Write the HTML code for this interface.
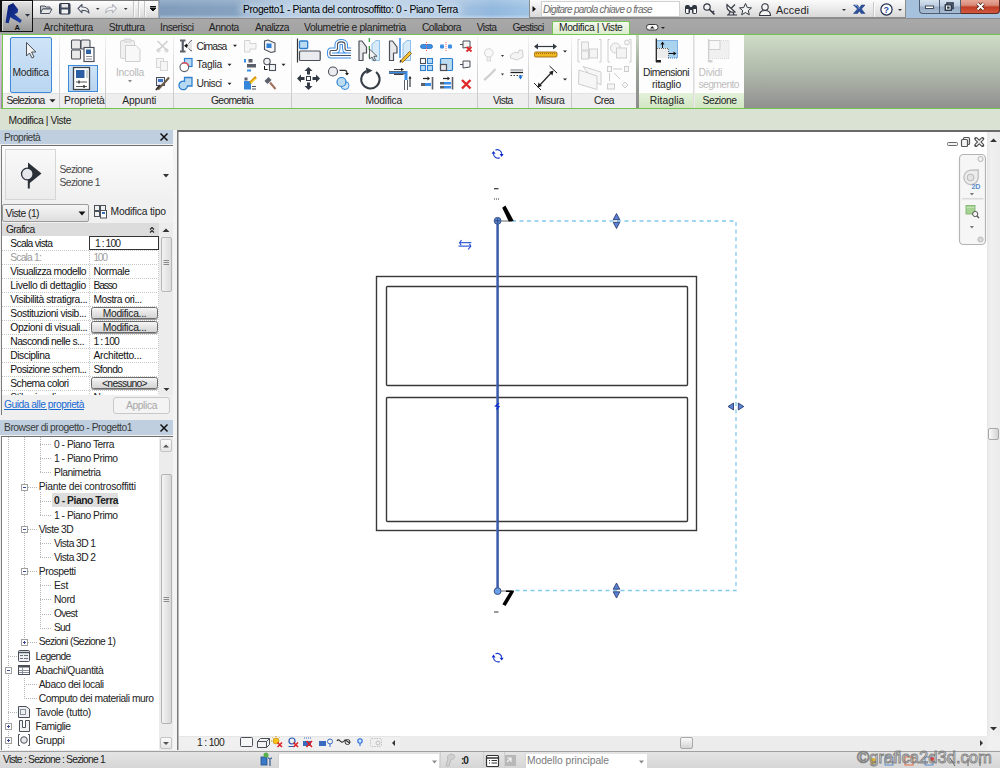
<!DOCTYPE html>
<html><head><meta charset="utf-8">
<style>
*{margin:0;padding:0;box-sizing:border-box}
html,body{width:1000px;height:768px;overflow:hidden;background:#f0f0f0;font-family:"Liberation Sans",sans-serif;font-size:10px;color:#1e1e1e}
.a{position:absolute}
.t{position:absolute;white-space:nowrap;line-height:1;}
svg{position:absolute;overflow:visible}
</style></head><body>
<div class="a" style="left:0px;top:0px;width:1000px;height:18px;background:linear-gradient(90deg,#8aa6c4,#a9c4de)"></div>
<div class="a" style="left:159px;top:0px;width:371px;height:18px;background:linear-gradient(90deg,#7f9cbc 0%,#85a2c1 20%,#a9c2dc 35%,#b9cee4 55%,#a6c2e0 80%,#92b8de 90%,#a0c4e4 100%)"></div>
<div class="a" style="left:160px;top:0px;width:370px;height:18px;background:linear-gradient(180deg,rgba(255,255,255,.18),rgba(255,255,255,0) 45%,rgba(0,0,0,0) 80%,rgba(255,255,255,.35))"></div>
<div class="a" style="left:240px;top:4px;width:222px;height:11px;background:rgba(214,228,242,.6);filter:blur(3px);border-radius:6px"></div>
<div class="t" style="left:243.00px;top:5.48px;font-size:10.3px;color:#000;letter-spacing:-0.359px;">Progetto1 - Pianta del controsoffitto: 0 - Piano Terra</div>
<div class="a" style="left:32px;top:0px;width:127px;height:19px;background:linear-gradient(180deg,#fdfdfd,#efefef 40%,#dedede 90%,#d0d0d0);border-top:1px solid #7a7a7a;border-bottom:1px solid #6e6e6e;border-right:1px solid #a8a8a8"></div>
<div class="a" style="left:529px;top:0px;width:377px;height:18px;background:linear-gradient(180deg,#fbfbfb,#ececec 45%,#d9d9d9);border-bottom:1px solid #8c8c8c;border-left:1px solid #8c8c8c;border-right:1px solid #8c8c8c"></div>
<div class="a" style="left:541px;top:1px;width:139px;height:16px;background:#fff;border:1px solid #d0d0d0"></div>
<div class="t" style="left:543.00px;top:5.24px;font-size:10px;color:#6a6a6a;letter-spacing:-0.703px;font-style:italic;">Digitare parola chiave o frase</div>
<div class="t" style="left:776.00px;top:5.06px;font-size:10.8px;color:#262626;letter-spacing:0.096px;">Accedi</div>
<div class="a" style="left:919px;top:0px;width:21px;height:14px;border:1px solid #4e5d72;border-top:none;border-radius:0 0 0 4px;background:linear-gradient(180deg,#d6e2ee,#bccde0 45%,#98acc6 55%,#a8bcd4)"></div>
<div class="a" style="left:940px;top:0px;width:21px;height:14px;border:1px solid #4e5d72;border-top:none;border-left:none;background:linear-gradient(180deg,#d6e2ee,#bccde0 45%,#98acc6 55%,#a8bcd4)"></div>
<div class="a" style="left:961px;top:0px;width:39px;height:14px;border:1px solid #5e2a22;border-top:none;border-left:none;border-radius:0 0 4px 0;background:linear-gradient(180deg,#e8a898,#d88a78 40%,#c23c24 55%,#d05a40)"></div>
<div class="a" style="left:0px;top:18px;width:1000px;height:16px;background:linear-gradient(180deg,#a9a9a9,#a2a2a2)"></div>
<div class="a" style="left:32px;top:18px;width:968px;height:1px;background:#8c8c8c"></div>
<div class="t" style="left:43.50px;top:23.28px;font-size:10.3px;color:#222;letter-spacing:-0.264px;">Architettura</div>
<div class="t" style="left:108.70px;top:23.28px;font-size:10.3px;color:#222;letter-spacing:-0.389px;">Struttura</div>
<div class="t" style="left:160.00px;top:23.28px;font-size:10.3px;color:#222;letter-spacing:-0.465px;">Inserisci</div>
<div class="t" style="left:208.70px;top:23.28px;font-size:10.3px;color:#222;letter-spacing:-0.395px;">Annota</div>
<div class="t" style="left:255.00px;top:23.28px;font-size:10.3px;color:#222;letter-spacing:-0.619px;">Analizza</div>
<div class="t" style="left:304.00px;top:23.28px;font-size:10.3px;color:#222;letter-spacing:-0.354px;">Volumetrie e planimetria</div>
<div class="t" style="left:422.00px;top:23.28px;font-size:10.3px;color:#222;letter-spacing:-0.566px;">Collabora</div>
<div class="t" style="left:476.80px;top:23.28px;font-size:10.3px;color:#222;letter-spacing:-0.624px;">Vista</div>
<div class="t" style="left:512.40px;top:23.28px;font-size:10.3px;color:#222;letter-spacing:-0.680px;">Gestisci</div>
<div class="a" style="left:552px;top:21px;width:78px;height:14px;background:linear-gradient(180deg,#f3f8ee,#d9ecca);border:1px solid #74c452;border-bottom:none;border-radius:2px 2px 0 0"></div>
<div class="t" style="left:559.00px;top:23.28px;font-size:10.3px;color:#222;letter-spacing:-0.373px;">Modifica | Viste</div>
<div class="a" style="left:0px;top:34px;width:1000px;height:75px;background:linear-gradient(180deg,#cfdec6 0%,#b3bdae 45%,#8f8f8f 100%)"></div>
<div class="a" style="left:0px;top:34px;width:1000px;height:1px;background:#74c452"></div>
<div class="a" style="left:0px;top:108px;width:1000px;height:1px;background:#74c452"></div>
<div class="a" style="left:2px;top:35px;width:742px;height:73px;background:#fdfdfd"></div>
<div class="a" style="left:2px;top:35px;width:1px;height:73px;background:#74c452"></div>
<div class="a" style="left:0px;top:34px;width:1px;height:75px;background:#d4b4dc"></div>
<div class="a" style="left:3px;top:93px;width:741px;height:15px;background:#eeeeee"></div>
<div class="a" style="left:3px;top:93px;width:741px;height:1px;background:#e3e3e3"></div>
<div class="a" style="left:639px;top:93px;width:54px;height:15px;background:linear-gradient(180deg,#e4f1da,#d1e6c2)"></div>
<div class="a" style="left:695px;top:93px;width:49px;height:15px;background:linear-gradient(180deg,#e4f1da,#d1e6c2)"></div>
<div class="a" style="left:59px;top:36px;width:1px;height:72px;background:linear-gradient(180deg,#f4f4f4,#d4d4d4 50%,#c8c8c8)"></div>
<div class="a" style="left:105px;top:36px;width:1px;height:72px;background:linear-gradient(180deg,#f4f4f4,#d4d4d4 50%,#c8c8c8)"></div>
<div class="a" style="left:173px;top:36px;width:1px;height:72px;background:linear-gradient(180deg,#f4f4f4,#d4d4d4 50%,#c8c8c8)"></div>
<div class="a" style="left:291px;top:36px;width:1px;height:72px;background:linear-gradient(180deg,#f4f4f4,#d4d4d4 50%,#c8c8c8)"></div>
<div class="a" style="left:477px;top:36px;width:1px;height:72px;background:linear-gradient(180deg,#f4f4f4,#d4d4d4 50%,#c8c8c8)"></div>
<div class="a" style="left:528px;top:36px;width:1px;height:72px;background:linear-gradient(180deg,#f4f4f4,#d4d4d4 50%,#c8c8c8)"></div>
<div class="a" style="left:571px;top:36px;width:1px;height:72px;background:linear-gradient(180deg,#f4f4f4,#d4d4d4 50%,#c8c8c8)"></div>
<div class="a" style="left:636px;top:35px;width:3px;height:73px;background:linear-gradient(180deg,#c9d6c2,#9aa297 50%,#8c8c8c)"></div>
<div class="a" style="left:693px;top:35px;width:2px;height:73px;background:linear-gradient(90deg,#d4d4d4,#f4f4f4)"></div>
<div class="t" style="left:6.50px;top:95.98px;font-size:10.3px;color:#262626;letter-spacing:-0.807px;">Seleziona</div>
<div class="t" style="left:64.00px;top:95.98px;font-size:10.3px;color:#262626;letter-spacing:-0.144px;">Proprietà</div>
<div class="t" style="left:122.30px;top:95.98px;font-size:10.3px;color:#262626;letter-spacing:-0.136px;">Appunti</div>
<div class="t" style="left:211.00px;top:95.98px;font-size:10.3px;color:#262626;letter-spacing:-0.677px;">Geometria</div>
<div class="t" style="left:365.50px;top:95.98px;font-size:10.3px;color:#262626;letter-spacing:-0.232px;">Modifica</div>
<div class="t" style="left:493.00px;top:95.98px;font-size:10.3px;color:#262626;letter-spacing:-0.644px;">Vista</div>
<div class="t" style="left:535.50px;top:95.98px;font-size:10.3px;color:#262626;letter-spacing:-0.318px;">Misura</div>
<div class="t" style="left:594.00px;top:95.98px;font-size:10.3px;color:#262626;letter-spacing:-0.582px;">Crea</div>
<div class="t" style="left:649.80px;top:95.98px;font-size:10.3px;color:#262626;letter-spacing:0.020px;">Ritaglia</div>
<div class="t" style="left:702.50px;top:95.98px;font-size:10.3px;color:#262626;letter-spacing:-0.464px;">Sezione</div>
<div class="a" style="left:10px;top:37px;width:42px;height:56px;background:linear-gradient(180deg,#cfe3f7,#bad6f1);border:1px solid #3c8ad8;border-radius:2px"></div>
<div class="a" style="left:68px;top:65px;width:30px;height:27px;background:linear-gradient(180deg,#cfe3f7,#b7d4f0);border:1px solid #3c8ad8"></div>
<div class="t" style="left:12.50px;top:68.28px;font-size:10.3px;color:#262626;letter-spacing:-0.270px;">Modifica</div>
<div class="t" style="left:116.00px;top:68.28px;font-size:10.3px;color:#b8b8b8;letter-spacing:-0.254px;">Incolla</div>
<div class="t" style="left:196.60px;top:41.98px;font-size:10.3px;color:#262626;letter-spacing:-0.854px;">Cimasa</div>
<div class="t" style="left:196.60px;top:60.48px;font-size:10.3px;color:#262626;letter-spacing:-0.237px;">Taglia</div>
<div class="t" style="left:196.60px;top:79.18px;font-size:10.3px;color:#262626;letter-spacing:-0.508px;">Unisci</div>
<div class="t" style="left:643.00px;top:68.48px;font-size:10.3px;color:#262626;letter-spacing:-0.495px;">Dimensioni</div>
<div class="t" style="left:652.00px;top:80.08px;font-size:10.3px;color:#262626;letter-spacing:-0.166px;">ritaglio</div>
<div class="t" style="left:698.50px;top:68.48px;font-size:10.3px;color:#bdbdbd;letter-spacing:-0.279px;">Dividi</div>
<div class="t" style="left:698.50px;top:80.08px;font-size:10.3px;color:#bdbdbd;letter-spacing:-0.596px;">segmento</div>
<div class="a" style="left:0px;top:109px;width:1000px;height:21px;background:#dae3d3"></div>
<div class="t" style="left:8.50px;top:115.98px;font-size:10.3px;color:#222;letter-spacing:-0.436px;">Modifica | Viste</div>
<div class="a" style="left:0px;top:130px;width:177px;height:620px;background:#f0f0f0"></div>
<div class="a" style="left:0px;top:130px;width:173px;height:14px;background:#bfcfdf"></div>
<div class="t" style="left:4.00px;top:132.78px;font-size:10.3px;color:#3a3a3a;letter-spacing:-0.644px;">Proprietà</div>
<div class="a" style="left:1px;top:145px;width:1px;height:270px;background:#7b7b7b"></div>
<div class="a" style="left:1px;top:145px;width:172px;height:1px;background:#6e6e6e"></div>
<div class="a" style="left:2px;top:146px;width:171px;height:56px;background:linear-gradient(180deg,#fdfdfd,#f0f0f0)"></div>
<div class="a" style="left:5px;top:149px;width:51px;height:51px;background:linear-gradient(180deg,#f9f9f9,#ececec);border:1px solid #d6d6d6"></div>
<div class="t" style="left:59.50px;top:165.48px;font-size:10.3px;color:#4a4a4a;letter-spacing:-0.607px;">Sezione</div>
<div class="t" style="left:59.50px;top:177.58px;font-size:10.3px;color:#4a4a4a;letter-spacing:-0.594px;">Sezione 1</div>
<div class="a" style="left:2px;top:204px;width:87px;height:18px;background:linear-gradient(180deg,#f6f6f6,#dedede);border:1px solid #9a9a9a;border-radius:2px"></div>
<div class="t" style="left:5.50px;top:208.68px;font-size:10.3px;color:#222;letter-spacing:-0.517px;">Viste (1)</div>
<div class="t" style="left:110.60px;top:206.98px;font-size:10.3px;color:#222;letter-spacing:-0.210px;">Modifica tipo</div>
<div class="a" style="left:2px;top:223px;width:157px;height:13px;background:#dcdcdc"></div>
<div class="t" style="left:6.00px;top:224.68px;font-size:10.3px;color:#222;letter-spacing:-0.672px;">Grafica</div>
<div class="a" style="left:2px;top:236px;width:157px;height:159px;background:#fff"></div>
<div class="a" style="left:159px;top:223px;width:14px;height:172px;background:#ececec"></div>
<div class="a" style="left:161px;top:237px;width:11px;height:55px;background:linear-gradient(90deg,#f2f2f2,#dcdcdc);border:1px solid #b8b8b8;border-radius:2px"></div>
<div class="t" style="left:10.30px;top:239.18px;font-size:10.3px;color:#111;letter-spacing:-0.712px;">Scala vista</div>
<div class="t" style="left:93.50px;top:239.18px;font-size:10.3px;color:#111;letter-spacing:-0.859px;">1 : 100</div>
<div class="a" style="left:2px;top:250px;width:157px;height:1px;background:repeating-linear-gradient(90deg,#c8c8c8 0 1px,#fff 1px 2px)"></div>
<div class="t" style="left:10.30px;top:253.18px;font-size:10.3px;color:#9a9a9a;letter-spacing:-0.822px;">Scala  1:</div>
<div class="t" style="left:93.50px;top:253.18px;font-size:10.3px;color:#a0a0a0;letter-spacing:-1.401px;">100</div>
<div class="a" style="left:2px;top:264px;width:157px;height:1px;background:repeating-linear-gradient(90deg,#c8c8c8 0 1px,#fff 1px 2px)"></div>
<div class="t" style="left:10.30px;top:267.18px;font-size:10.3px;color:#111;letter-spacing:-0.524px;">Visualizza modello</div>
<div class="t" style="left:93.50px;top:267.18px;font-size:10.3px;color:#111;letter-spacing:-0.417px;">Normale</div>
<div class="a" style="left:2px;top:278px;width:157px;height:1px;background:repeating-linear-gradient(90deg,#c8c8c8 0 1px,#fff 1px 2px)"></div>
<div class="t" style="left:10.30px;top:281.18px;font-size:10.3px;color:#111;letter-spacing:-0.310px;">Livello di dettaglio</div>
<div class="t" style="left:93.50px;top:281.18px;font-size:10.3px;color:#111;letter-spacing:-1.191px;">Basso</div>
<div class="a" style="left:2px;top:292px;width:157px;height:1px;background:repeating-linear-gradient(90deg,#c8c8c8 0 1px,#fff 1px 2px)"></div>
<div class="t" style="left:10.30px;top:295.18px;font-size:10.3px;color:#111;letter-spacing:-0.401px;">Visibilità stratigra...</div>
<div class="t" style="left:93.50px;top:295.18px;font-size:10.3px;color:#111;letter-spacing:-0.489px;">Mostra ori...</div>
<div class="a" style="left:2px;top:306px;width:157px;height:1px;background:repeating-linear-gradient(90deg,#c8c8c8 0 1px,#fff 1px 2px)"></div>
<div class="t" style="left:10.30px;top:309.18px;font-size:10.3px;color:#111;letter-spacing:-0.416px;">Sostituzioni visib...</div>
<div class="a" style="left:91px;top:307px;width:67px;height:12px;background:linear-gradient(180deg,#f6f6f6,#e4e4e4 50%,#d4d4d4);border:1px solid #6b6b6b;border-radius:2.5px;box-shadow:0 1px 0 #9a9a9a"></div>
<div class="t" style="left:102.75px;top:309.18px;font-size:10.3px;color:#222;letter-spacing:-0.312px;">Modifica...</div>
<div class="a" style="left:2px;top:320px;width:157px;height:1px;background:repeating-linear-gradient(90deg,#c8c8c8 0 1px,#fff 1px 2px)"></div>
<div class="t" style="left:10.30px;top:323.18px;font-size:10.3px;color:#111;letter-spacing:-0.423px;">Opzioni di visuali...</div>
<div class="a" style="left:91px;top:321px;width:67px;height:12px;background:linear-gradient(180deg,#f6f6f6,#e4e4e4 50%,#d4d4d4);border:1px solid #6b6b6b;border-radius:2.5px;box-shadow:0 1px 0 #9a9a9a"></div>
<div class="t" style="left:102.75px;top:323.18px;font-size:10.3px;color:#222;letter-spacing:-0.312px;">Modifica...</div>
<div class="a" style="left:2px;top:334px;width:157px;height:1px;background:repeating-linear-gradient(90deg,#c8c8c8 0 1px,#fff 1px 2px)"></div>
<div class="t" style="left:10.30px;top:337.18px;font-size:10.3px;color:#111;letter-spacing:-0.552px;">Nascondi nelle s...</div>
<div class="t" style="left:93.50px;top:337.18px;font-size:10.3px;color:#111;letter-spacing:-0.859px;">1 : 100</div>
<div class="a" style="left:2px;top:348px;width:157px;height:1px;background:repeating-linear-gradient(90deg,#c8c8c8 0 1px,#fff 1px 2px)"></div>
<div class="t" style="left:10.30px;top:351.18px;font-size:10.3px;color:#111;letter-spacing:-0.468px;">Disciplina</div>
<div class="t" style="left:93.50px;top:351.18px;font-size:10.3px;color:#111;letter-spacing:-0.315px;">Architetto...</div>
<div class="a" style="left:2px;top:362px;width:157px;height:1px;background:repeating-linear-gradient(90deg,#c8c8c8 0 1px,#fff 1px 2px)"></div>
<div class="t" style="left:10.30px;top:365.18px;font-size:10.3px;color:#111;letter-spacing:-0.582px;">Posizione schem...</div>
<div class="t" style="left:93.50px;top:365.18px;font-size:10.3px;color:#111;letter-spacing:-0.612px;">Sfondo</div>
<div class="a" style="left:2px;top:376px;width:157px;height:1px;background:repeating-linear-gradient(90deg,#c8c8c8 0 1px,#fff 1px 2px)"></div>
<div class="t" style="left:10.30px;top:379.18px;font-size:10.3px;color:#111;letter-spacing:-0.545px;">Schema colori</div>
<div class="a" style="left:91px;top:377px;width:67px;height:12px;background:linear-gradient(180deg,#f6f6f6,#e4e4e4 50%,#d4d4d4);border:1px solid #6b6b6b;border-radius:2.5px;box-shadow:0 1px 0 #9a9a9a"></div>
<div class="t" style="left:102.00px;top:379.18px;font-size:10.3px;color:#222;letter-spacing:-0.668px;">&lt;nessuno&gt;</div>
<div class="a" style="left:2px;top:390px;width:157px;height:1px;background:repeating-linear-gradient(90deg,#c8c8c8 0 1px,#fff 1px 2px)"></div>
<div class="t" style="left:10.30px;top:393.18px;font-size:10.3px;color:#111;letter-spacing:-0.465px;">Stile visualizzaz...</div>
<div class="t" style="left:93.50px;top:393.18px;font-size:10.3px;color:#111;letter-spacing:-0.955px;">Nessuno</div>
<div class="a" style="left:89px;top:237px;width:1px;height:158px;background:repeating-linear-gradient(180deg,#c8c8c8 0 1px,#fff 1px 2px)"></div>
<div class="a" style="left:158px;top:237px;width:1px;height:158px;background:repeating-linear-gradient(180deg,#c8c8c8 0 1px,#fff 1px 2px)"></div>
<div class="a" style="left:89px;top:236px;width:70px;height:14px;background:#fff;border:1.5px solid #333"></div>
<div class="t" style="left:95.00px;top:239.18px;font-size:10.3px;color:#222;letter-spacing:-0.931px;">1 : 100</div>
<div class="a" style="left:2px;top:395px;width:171px;height:23px;background:#f0f0f0"></div>
<div class="t" style="left:4.00px;top:399.78px;font-size:10.3px;color:#1a6ad0;letter-spacing:-0.495px;text-decoration:underline;">Guida alle proprietà</div>
<div class="a" style="left:113px;top:397px;width:57px;height:17px;background:#f4f4f4;border:1px solid #c8c8c8;border-radius:3px"></div>
<div class="t" style="left:126.00px;top:401.48px;font-size:10.3px;color:#a8a8a8;letter-spacing:-0.400px;">Applica</div>
<div class="a" style="left:0px;top:420px;width:173px;height:15px;background:#bfcfdf"></div>
<div class="t" style="left:4.00px;top:422.98px;font-size:10.3px;color:#3a3a3a;letter-spacing:-0.489px;">Browser di progetto - Progetto1</div>
<div class="a" style="left:1px;top:436px;width:172px;height:1px;background:#6e6e6e"></div>
<div class="a" style="left:1px;top:436px;width:1px;height:314px;background:#7b7b7b"></div>
<div class="a" style="left:2px;top:437px;width:157px;height:313px;background:#fff"></div>
<div class="a" style="left:159px;top:437px;width:14px;height:313px;background:#ececec"></div>
<div class="a" style="left:161px;top:474px;width:11px;height:250px;background:linear-gradient(90deg,#f4f4f4,#d8d8d8);border:1px solid #b4b4b4;border-radius:2px"></div>
<div class="a" style="left:160px;top:439px;width:12px;height:13px;background:linear-gradient(180deg,#fafafa,#e6e6e6);border:1px solid #c4c4c4;border-radius:2px"></div>
<div class="a" style="left:160px;top:737px;width:12px;height:12px;background:linear-gradient(180deg,#fafafa,#e6e6e6);border:1px solid #c4c4c4;border-radius:2px"></div>
<div class="a" style="left:52px;top:493px;width:66px;height:14px;background:#dedede"></div>
<div class="t" style="left:54.00px;top:440.08px;font-size:10.3px;color:#222;letter-spacing:-0.492px;">0 - Piano Terra</div>
<div class="t" style="left:54.00px;top:454.18px;font-size:10.3px;color:#222;letter-spacing:-0.499px;">1 - Piano Primo</div>
<div class="t" style="left:54.00px;top:468.28px;font-size:10.3px;color:#222;letter-spacing:-0.456px;">Planimetria</div>
<div class="t" style="left:38.70px;top:482.38px;font-size:10.3px;color:#222;letter-spacing:-0.281px;">Piante dei controsoffitti</div>
<div class="t" style="left:54.00px;top:496.48px;font-size:10.3px;color:#222;letter-spacing:-0.453px;font-weight:bold;">0 - Piano Terra</div>
<div class="t" style="left:54.00px;top:510.58px;font-size:10.3px;color:#222;letter-spacing:-0.499px;">1 - Piano Primo</div>
<div class="t" style="left:38.70px;top:524.68px;font-size:10.3px;color:#222;letter-spacing:-0.531px;">Viste 3D</div>
<div class="t" style="left:54.00px;top:538.78px;font-size:10.3px;color:#222;letter-spacing:-0.584px;">Vista 3D 1</div>
<div class="t" style="left:54.00px;top:552.88px;font-size:10.3px;color:#222;letter-spacing:-0.584px;">Vista 3D 2</div>
<div class="t" style="left:38.70px;top:566.98px;font-size:10.3px;color:#222;letter-spacing:-0.406px;">Prospetti</div>
<div class="t" style="left:54.00px;top:581.08px;font-size:10.3px;color:#222;letter-spacing:-0.297px;">Est</div>
<div class="t" style="left:54.00px;top:595.18px;font-size:10.3px;color:#222;letter-spacing:-0.332px;">Nord</div>
<div class="t" style="left:54.00px;top:609.28px;font-size:10.3px;color:#222;letter-spacing:-0.784px;">Ovest</div>
<div class="t" style="left:54.00px;top:623.38px;font-size:10.3px;color:#222;letter-spacing:-0.781px;">Sud</div>
<div class="t" style="left:38.70px;top:637.48px;font-size:10.3px;color:#222;letter-spacing:-0.676px;">Sezioni (Sezione 1)</div>
<div class="t" style="left:35.50px;top:651.58px;font-size:10.3px;color:#222;letter-spacing:-0.734px;">Legende</div>
<div class="t" style="left:35.50px;top:665.68px;font-size:10.3px;color:#222;letter-spacing:-0.355px;">Abachi/Quantità</div>
<div class="t" style="left:38.70px;top:679.78px;font-size:10.3px;color:#222;letter-spacing:-0.448px;">Abaco dei locali</div>
<div class="t" style="left:38.70px;top:693.88px;font-size:10.3px;color:#222;letter-spacing:-0.443px;">Computo dei materiali muro</div>
<div class="t" style="left:35.50px;top:707.98px;font-size:10.3px;color:#222;letter-spacing:-0.289px;">Tavole (tutto)</div>
<div class="t" style="left:35.50px;top:722.08px;font-size:10.3px;color:#222;letter-spacing:-0.490px;">Famiglie</div>
<div class="t" style="left:35.50px;top:736.18px;font-size:10.3px;color:#222;letter-spacing:-0.320px;">Gruppi</div>
<svg style="left:0px;top:130px" width="177" height="620" viewBox="0 130 177 620"><path d="M8.5,437 V749" stroke="#b4b4b4" stroke-width="1" stroke-dasharray="1,1"/><path d="M24.5,437 V642" stroke="#b4b4b4" stroke-width="1" stroke-dasharray="1,1"/><path d="M40.5,437 V472" stroke="#b4b4b4" stroke-width="1" stroke-dasharray="1,1"/><path d="M40,444.5 H52" stroke="#b4b4b4" stroke-width="1" stroke-dasharray="1,1"/><path d="M40,458.5 H52" stroke="#b4b4b4" stroke-width="1" stroke-dasharray="1,1"/><path d="M40,472.5 H52" stroke="#b4b4b4" stroke-width="1" stroke-dasharray="1,1"/><path d="M40.5,492 V515" stroke="#b4b4b4" stroke-width="1" stroke-dasharray="1,1"/><path d="M40,501.5 H52" stroke="#b4b4b4" stroke-width="1" stroke-dasharray="1,1"/><path d="M40,515.5 H52" stroke="#b4b4b4" stroke-width="1" stroke-dasharray="1,1"/><path d="M40.5,534 V557" stroke="#b4b4b4" stroke-width="1" stroke-dasharray="1,1"/><path d="M40,543.5 H52" stroke="#b4b4b4" stroke-width="1" stroke-dasharray="1,1"/><path d="M40,557.5 H52" stroke="#b4b4b4" stroke-width="1" stroke-dasharray="1,1"/><path d="M40.5,576 V628" stroke="#b4b4b4" stroke-width="1" stroke-dasharray="1,1"/><path d="M40,585.5 H52" stroke="#b4b4b4" stroke-width="1" stroke-dasharray="1,1"/><path d="M40,599.5 H52" stroke="#b4b4b4" stroke-width="1" stroke-dasharray="1,1"/><path d="M40,614.5 H52" stroke="#b4b4b4" stroke-width="1" stroke-dasharray="1,1"/><path d="M40,628.5 H52" stroke="#b4b4b4" stroke-width="1" stroke-dasharray="1,1"/><path d="M24,487.5 H37" stroke="#b4b4b4" stroke-width="1" stroke-dasharray="1,1"/><path d="M24,529.5 H37" stroke="#b4b4b4" stroke-width="1" stroke-dasharray="1,1"/><path d="M24,571.5 H37" stroke="#b4b4b4" stroke-width="1" stroke-dasharray="1,1"/><path d="M24,642.5 H37" stroke="#b4b4b4" stroke-width="1" stroke-dasharray="1,1"/><path d="M8,656.5 H18" stroke="#b4b4b4" stroke-width="1" stroke-dasharray="1,1"/><path d="M8,712.5 H18" stroke="#b4b4b4" stroke-width="1" stroke-dasharray="1,1"/><path d="M24.5,678 V698" stroke="#b4b4b4" stroke-width="1" stroke-dasharray="1,1"/><path d="M24,684.5 H37" stroke="#b4b4b4" stroke-width="1" stroke-dasharray="1,1"/><path d="M24,698.5 H37" stroke="#b4b4b4" stroke-width="1" stroke-dasharray="1,1"/><rect x="21.5" y="484.5" width="6" height="6" fill="#fff" stroke="#a0a0a0"/><path d="M23,487.5 H26" stroke="#3a4a9a" stroke-width="1"/><rect x="21.5" y="526.5" width="6" height="6" fill="#fff" stroke="#a0a0a0"/><path d="M23,529.5 H26" stroke="#3a4a9a" stroke-width="1"/><rect x="21.5" y="568.5" width="6" height="6" fill="#fff" stroke="#a0a0a0"/><path d="M23,571.5 H26" stroke="#3a4a9a" stroke-width="1"/><rect x="21.5" y="639.5" width="6" height="6" fill="#fff" stroke="#a0a0a0"/><path d="M23,642.5 H26" stroke="#3a4a9a" stroke-width="1"/><path d="M24.5,641 V644" stroke="#3a4a9a" stroke-width="1"/><rect x="5.5" y="667.5" width="6" height="6" fill="#fff" stroke="#a0a0a0"/><path d="M7,670.5 H10" stroke="#3a4a9a" stroke-width="1"/><rect x="5.5" y="723.5" width="6" height="6" fill="#fff" stroke="#a0a0a0"/><path d="M7,726.5 H10" stroke="#3a4a9a" stroke-width="1"/><path d="M8.5,725 V728" stroke="#3a4a9a" stroke-width="1"/><rect x="5.5" y="737.5" width="6" height="6" fill="#fff" stroke="#a0a0a0"/><path d="M7,740.5 H10" stroke="#3a4a9a" stroke-width="1"/><path d="M8.5,739 V742" stroke="#3a4a9a" stroke-width="1"/><rect x="18.5" y="650.5" width="11" height="11" rx="1" fill="#eef0f4" stroke="#4a505a"/><path d="M19,652.5 H29" stroke="#4a505a" stroke-width="1.4"/><path d="M20,655.5 H23 M24,655.5 H28 M20,658.5 H23 M24,658.5 H28" stroke="#6a707a"/><rect x="18.5" y="665.5" width="11" height="9" fill="#fff" stroke="#4a505a"/><rect x="18" y="665" width="12" height="2.5" fill="#4a505a"/><path d="M19,670.5 H29 M19,672.5 H29 M22.5,667 V674" stroke="#8a909a"/><path d="M18.5,706.5 H26 L29.5,709 V717.5 H18.5 Z" fill="#eef0f4" stroke="#4a505a"/><rect x="20.5" y="709.5" width="5" height="5" fill="none" stroke="#8a909a"/><path d="M19.5,720.5 V731.5 H29.5 V720.5 H25.5 V727.5 H22.5 V720.5 Z" fill="#f2f2f2" stroke="#4a505a"/><path d="M20,734.5 H18.5 V745.5 H20 M28,734.5 H29.5 V745.5 H28" stroke="#4a505a" fill="none"/><circle cx="24" cy="740" r="3.3" fill="#e8e8e8" stroke="#4a505a"/><path d="M28,162.5 L41.5,173.5 L28,184.5 Z" fill="#2a2f38"/><path d="M28.8,179 V188.5" stroke="#2a2f38" stroke-width="2"/><circle cx="27.3" cy="174" r="5.8" fill="#e6e7ec" stroke="#2a2f38" stroke-width="1.3"/><path d="M163,174 L169,174 L166,177.5 Z" fill="#333"/><path d="M78.5,211.5 L85.5,211.5 L82,215.5 Z" fill="#111"/><g fill="#f0f0f0" stroke="#4a505a" stroke-width="1"><rect x="94.5" y="205.5" width="5" height="5"/><rect x="100.5" y="205.5" width="5" height="5"/><rect x="94.5" y="211.5" width="5" height="5"/></g><rect x="100.5" y="210.5" width="6" height="7.5" fill="#fff" stroke="#4a505a"/><rect x="102" y="212" width="3" height="2" fill="#2f6fc8"/><path d="M150,229.5 L152,227.5 L154,229.5 M150,232.5 L152,230.5 L154,232.5" stroke="#222" stroke-width="1.2" fill="none"/><path d="M162.5,232 L166,228.5 L169.5,232 Z" fill="#333"/><path d="M163.5,388 L169.5,388 L166.5,391 Z" fill="#333"/><path d="M163.5,260.5 H169 M163.5,262.5 H169 M163.5,264.5 H169" stroke="#8a8a8a"/><path d="M160.5,140.5 L167.5,133.5 M167.5,140.5 L160.5,133.5" stroke="#111" stroke-width="1.5"/><path d="M160.5,431.5 L167.5,424.5 M167.5,431.5 L160.5,424.5" stroke="#111" stroke-width="1.5"/><path d="M163,447.5 L166,444.5 L169,447.5 Z" fill="#555"/><path d="M163,742 L166,745 L169,742 Z" fill="#555"/><path d="M163.5,597.5 H169 M163.5,599.5 H169 M163.5,601.5 H169" stroke="#8a8a8a"/></svg>
<div class="a" style="left:177px;top:130px;width:823px;height:620px;background:#fff"></div>
<div class="a" style="left:177px;top:130px;width:823px;height:2px;background:#6a6a6a"></div>
<div class="a" style="left:177px;top:130px;width:1px;height:620px;background:#7a7a7a"></div>
<div class="a" style="left:178px;top:132px;width:1px;height:618px;background:#b8b8b8"></div>
<div class="a" style="left:173px;top:130px;width:4px;height:620px;background:#f4f4f4"></div>
<div class="a" style="left:987px;top:132px;width:13px;height:604px;background:linear-gradient(90deg,#e6e6e6,#f0f0f0 30%,#ececec)"></div>
<div class="a" style="left:988px;top:428px;width:11px;height:12px;background:linear-gradient(90deg,#fafafa,#d4d4d4);border:1px solid #a8a8a8;border-radius:2px"></div>
<div class="a" style="left:179px;top:736px;width:808px;height:14px;background:#f0f0f0"></div>
<div class="a" style="left:179px;top:736px;width:808px;height:1px;background:#e6e6e6"></div>
<div class="a" style="left:400px;top:736px;width:587px;height:14px;background:#ececec"></div>
<div class="a" style="left:680px;top:737px;width:13px;height:12px;background:linear-gradient(180deg,#fafafa,#d4d4d4);border:1px solid #a8a8a8;border-radius:2px"></div>
<div class="a" style="left:987px;top:736px;width:13px;height:14px;background:#f0f0f0"></div>
<div class="t" style="left:197.00px;top:737.78px;font-size:10.3px;color:#222;letter-spacing:-0.645px;">1 : 100</div>
<svg style="left:177px;top:130px" width="823" height="620" viewBox="177 130 823 620"><rect x="376.5" y="276.5" width="320" height="254" fill="none" stroke="#383838" stroke-width="1.4"/><rect x="386.5" y="286.5" width="301" height="99" rx="1" fill="none" stroke="#383838" stroke-width="1.4"/><rect x="386.5" y="397.5" width="301" height="124" rx="1" fill="none" stroke="#383838" stroke-width="1.4"/><path d="M512,221 H736 V590.5 H512" fill="none" stroke="#82c9ee" stroke-width="1.3" stroke-dasharray="4,3.5"/><path d="M501,221 H512 M501,591 H512" stroke="#666" stroke-width="1"/><path d="M497.6,221 V591" stroke="#3352a0" stroke-width="2.4"/><path d="M496.8,221 V591" stroke="#6d8ad0" stroke-width=".6"/><circle cx="497.6" cy="220.8" r="3.4" fill="#5a8ad8" stroke="#3a4f80" stroke-width="1"/><path d="M495,220.8 H500 M497.6,218.2 V223.4" stroke="#2a3a70" stroke-width=".8"/><circle cx="497.6" cy="591.1" r="3.4" fill="#6aa0e8" stroke="#3a4f80" stroke-width="1"/><path d="M502.2,207.8 L505.4,205.6 L513.8,220.9 L508.8,221.4 Z" fill="#000"/><path d="M506,590.6 L514,590.6 L513.8,592 L505.6,606 L502.4,604.2 L509.8,591.9 L506,591.9 Z" fill="#000"/><path d="M494,188.7 H498.5" stroke="#333" stroke-width="1.2"/><path d="M494,199 H500" stroke="#333" stroke-width="1" stroke-dasharray="1,1"/><path d="M494,612 H498.5" stroke="#555" stroke-width="1.2"/><path d="M499,403 L495.5,406 L499,406.5 L496.5,409.5" stroke="#0a2ad0" stroke-width="1.2" fill="none"/><path d="M495.40000000000003,150.1 A4.4,4.4 0 0 1 501.70000000000005,154.1" stroke="#1a3ad0" stroke-width="1.1" fill="none"/><path d="M499.8,157.70000000000002 A4.4,4.4 0 0 1 493.5,153.70000000000002" stroke="#1a3ad0" stroke-width="1.1" fill="none"/><path d="M499.6,154.1 L503.6,154.1 L501.70000000000005,156.9 Z M495.6,153.70000000000002 L491.6,153.70000000000002 L493.5,150.9 Z" fill="#0a28c8"/><path d="M495.40000000000003,653.8000000000001 A4.4,4.4 0 0 1 501.70000000000005,657.8000000000001" stroke="#1a3ad0" stroke-width="1.1" fill="none"/><path d="M499.8,661.4 A4.4,4.4 0 0 1 493.5,657.4" stroke="#1a3ad0" stroke-width="1.1" fill="none"/><path d="M499.6,657.8000000000001 L503.6,657.8000000000001 L501.70000000000005,660.6 Z M495.6,657.4 L491.6,657.4 L493.5,654.6 Z" fill="#0a28c8"/><path d="M460,242.6 H471.3 M458.5,246.2 H470" stroke="#3a64d4" stroke-width="1.2"/><path d="M461.5,240 L459.6,242.8 L461.2,245.2 M469.5,243.8 L470.8,246.2 L468.2,249.5" stroke="#2048d0" stroke-width="1.1" fill="none"/><path d="M616.5,213.5 L619.8,219.7 L613.2,219.7 Z M616.5,228.5 L619.8,222.3 L613.2,222.3 Z" fill="#5b82d6" stroke="#1f2f60" stroke-width=".8" stroke-linejoin="round"/><path d="M616.5,583.0 L619.8,589.2 L613.2,589.2 Z M616.5,598.0 L619.8,591.8 L613.2,591.8 Z" fill="#5b82d6" stroke="#1f2f60" stroke-width=".8" stroke-linejoin="round"/><path d="M728,406.5 L733.5,403 L733.5,410 Z M743.8,406.5 L738.3,403 L738.3,410 Z" fill="#5b82d6" stroke="#1f2f60" stroke-width=".8"/><rect x="947.5" y="142.5" width="10" height="3" rx="1" fill="#f4f4f4" stroke="#666"/><rect x="963.5" y="137.5" width="6" height="7" rx="1" fill="#eee" stroke="#555" stroke-width="1.2"/><rect x="961.5" y="139.5" width="6" height="7" rx="1" fill="#f4f4f4" stroke="#555" stroke-width="1.2"/><path d="M976,138.8 L982.5,145.2 M982.5,138.8 L976,145.2" stroke="#4a4a4a" stroke-width="3.6" stroke-linecap="round"/><path d="M976,138.8 L982.5,145.2 M982.5,138.8 L976,145.2" stroke="#f8f8f8" stroke-width="1.5"/><path d="M990,142 L993.5,138.5 L997,142 Z M990,727 L993.5,730.5 L997,727 Z" fill="#333"/><path d="M980,740 L983,743 L980,746 Z M395,740 L392,743 L395,746 Z" fill="#333"/><rect x="959.5" y="154.5" width="26" height="90" rx="4" fill="#f6f6f6" stroke="#b4b4b4" stroke-width="1.2"/><circle cx="980.5" cy="159" r="2.6" fill="#e8e8e8" stroke="#b8b8b8" stroke-width="1"/><path d="M979.3,157.8 L981.7,160.2 M981.7,157.8 L979.3,160.2" stroke="#fff" stroke-width=".8"/><circle cx="980.5" cy="239.5" r="2.6" fill="#d8d8d8" stroke="#bcbcbc" stroke-width="1"/><path d="M978.2,170 V178 A7.2,7.2 0 1 1 970.8,170.2 Z" fill="#ececec" stroke="#bdbdbd" stroke-width="1.3"/><circle cx="970.5" cy="177.5" r="3.2" fill="#e4e4e4" stroke="#bdbdbd" stroke-width="1.1"/><text x="971.5" y="188.6" font-family="Liberation Sans" font-weight="bold" font-size="7.2" fill="#5a8cc8" letter-spacing="-0.3">2D</text><path d="M969.8,193 L974,193 L971.9,195.4 Z M969.8,226 L974,226 L971.9,228.4 Z" fill="#7a7a7a"/><path d="M962,198.8 H983.5" stroke="#d4d4d4" stroke-width="1.2"/><rect x="966" y="205.5" width="9" height="8.5" fill="#a6d294" stroke="#78b064" stroke-width=".8"/><path d="M966.5,207.5 H974.5" stroke="#c8e4bc" stroke-width=".8"/><circle cx="975.2" cy="214" r="2.6" fill="#f4f4f4" stroke="#555" stroke-width="1"/><path d="M977,216 L979,218" stroke="#555" stroke-width="1.4"/><rect x="240.5" y="737.5" width="12" height="9" rx="1" fill="#f6f6f6" stroke="#4a505a"/><path d="M257.5,741.5 L260.5,738.5 H269.5 V744.5 L266.5,747.5 H257.5 Z M257.5,741.5 H266.5 V747.5 M266.5,741.5 L269.5,738.5" fill="#f4f4f4" stroke="#4a505a"/><circle cx="276" cy="741" r="3" fill="#f7c21a" stroke="#b88600" stroke-width=".6"/><path d="M276,736 V737 M271,741 H272 M272.5,737.5 L273.3,738.3 M279.5,737.5 L278.7,738.3" stroke="#d9a000"/><path d="M277.5,742.5 L282,747 M282,742.5 L277.5,747" stroke="#e02020" stroke-width="1.5"/><circle cx="292" cy="741" r="3" fill="none" stroke="#2a58b0" stroke-width="1.2"/><path d="M288.5,746.5 H295" stroke="#2a58b0"/><path d="M293.5,742.5 L298,747 M298,742.5 L293.5,747" stroke="#e02020" stroke-width="1.5"/><rect x="303" y="741" width="8" height="5" fill="#3a6ac0"/><path d="M304,738 H312" stroke="#3a6ac0" stroke-dasharray="1,1"/><path d="M306.5,741 L312,747 M312,741 L306.5,747" stroke="#e02020" stroke-width="1.5"/><rect x="319" y="741" width="7" height="5" fill="#3a6ac0"/><circle cx="330" cy="741.5" r="2.5" fill="none" stroke="#3a6ac0"/><path d="M330,744 V747" stroke="#3a6ac0"/><path d="M337,741 C339,737 341,745 344,741 C346,738 348,744 350,742" stroke="#333" stroke-width="1.2" fill="none"/><circle cx="347.5" cy="742" r="2.5" fill="none" stroke="#333"/><circle cx="360" cy="741" r="2.2" fill="#cfe4ff" stroke="#2a6ad0" stroke-width="1.1"/><path d="M360,743.5 V746" stroke="#2a6ad0" stroke-width="1.1"/><rect x="370.5" y="738.5" width="11" height="8" rx="1" fill="none" stroke="#c0c0c0" stroke-dasharray="1.5,1"/><circle cx="378" cy="743" r="2" fill="none" stroke="#c0c0c0"/></svg>
<div class="a" style="left:0px;top:750px;width:1000px;height:18px;background:linear-gradient(180deg,#e6e6e6,#d6d6d6)"></div>
<div class="a" style="left:0px;top:750px;width:1000px;height:1px;background:#ececec"></div>
<div class="a" style="left:0px;top:751px;width:1000px;height:1px;background:#a0a0a0"></div>
<div class="t" style="left:3.00px;top:755.28px;font-size:10.3px;color:#222;letter-spacing:-0.777px;">Viste : Sezione : Sezione 1</div>
<div class="a" style="left:278px;top:753px;width:161px;height:15px;background:#fff;border-left:1px solid #d4d4d4;border-top:1px solid #e4e4e4"></div>
<div class="a" style="left:525px;top:753px;width:122px;height:15px;background:#fff;border-left:1px solid #d4d4d4;border-top:1px solid #e4e4e4"></div>
<div class="t" style="left:527.00px;top:756.48px;font-size:10.3px;color:#7a7a7a;letter-spacing:-0.057px;">Modello principale</div>
<div class="t" style="left:461.00px;top:756.24px;font-size:10px;color:#222;letter-spacing:-1.195px;font-weight:bold;">:0</div>
<svg style="left:0px;top:750px" width="1000" height="18" viewBox="0 750 1000 18"><path d="M432,760.5 L437,760.5 L434.5,763.5 Z M639,760.5 L644,760.5 L641.5,763.5 Z" fill="#8a8a8a"/><rect x="261" y="757" width="6" height="8" fill="#3a78c8" stroke="#20508a" stroke-width=".8"/><circle cx="266" cy="755" r="2.5" fill="#5ab04a"/><path d="M270,759 V766 M268.5,757.5 A1.5,1.5 0 0 0 271.5,757.5" stroke="#20508a" stroke-width="1.1" fill="none"/><path d="M446,766 L448,759 C446,756 450,753 453,754.5 C456,756 455,759 451,759.5 L449,766 Z" fill="#d0d0d0" stroke="#b8b8b8"/><rect x="486.5" y="755.5" width="12" height="11" rx="1" fill="#fff" stroke="#333" stroke-width="1.2"/><path d="M486.5,758 H498.5" stroke="#333" stroke-width="1.5"/><path d="M489,760.5 H490 M491.5,760.5 H497 M489,763 H490 M491.5,763 H497" stroke="#333"/><rect x="505" y="755" width="11" height="11" fill="#b8b8b8"/><path d="M507,762 L511,758 M507,758 H511 V762" stroke="#f4f4f4" stroke-width="1.2" fill="none"/><path d="M440.5,752 V768 M483.5,752 V768 M504.5,752 V768" stroke="#cfcfcf"/><g opacity=".9"><circle cx="873" cy="761" r="3" fill="#e0b020"/><rect x="885" y="757" width="8" height="8" fill="none" stroke="#4a80c8"/><rect x="905" y="757" width="8" height="8" fill="none" stroke="#e06030"/><rect x="925" y="757" width="8" height="8" fill="none" stroke="#4a80c8"/><circle cx="932" cy="759" r="2" fill="#e03030"/><path d="M950,758 L955,766 M968,758 V766 M980,758 V766" stroke="#555"/></g><text x="857" y="762.5" font-family="Liberation Sans" font-size="16.6" fill="#ececec" fill-opacity=".55" stroke="#6a6a6a" stroke-width=".9" stroke-opacity=".8">©grafica2d3d.com</text></svg>
<div class="a" style="left:0px;top:0px;width:33px;height:32px;background:#111"></div>
<div class="a" style="left:2px;top:1px;width:30px;height:30px;background:linear-gradient(180deg,#e2e2e2,#c2c2c2 40%,#a9a9a9 75%,#979797);border-top:1px solid #f4f4f4;border-left:1px solid #d8d8d8"></div>
<svg style="left:0px;top:0px" width="1000" height="130" viewBox="0 0 1000 130"><defs><linearGradient id="rg" x1="0" y1="0" x2="1" y2="1"><stop offset="0" stop-color="#081a6e"/><stop offset="1" stop-color="#2143a8"/></linearGradient></defs><path d="M8.2,5.5 L13.2,3 L18.2,9.5 L17.5,12.8 L14.5,14.3 L21.8,20.3 L20.3,23 L10.3,17.3 L8.7,23.2 L5.5,22.7 Z" fill="url(#rg)"/><path d="M25,14 L30,14 L27.5,16.8 Z" fill="#2a3140"/><text x="14.5" y="30" font-family="Liberation Sans" font-weight="bold" font-size="7.5" fill="#111">A</text><path d="M40.5,6 L45,6 L46,7 L50,7 L50,9 L43,9 L40.5,13 Z" fill="#c9c9c9" stroke="#4a5262" stroke-width="1"/><path d="M42.5,9 L52,9 L49.5,13.5 L40.5,13.5 Z" fill="#e8e8e8" stroke="#4a5262" stroke-width="1"/><rect x="59.5" y="3.5" width="10.5" height="10.5" rx="1" fill="#3f4a5e" stroke="#2b3344"/><rect x="61.5" y="4" width="6.5" height="3.5" fill="#e6e6e6"/><rect x="61.5" y="9.5" width="6.5" height="4" fill="#f2f2f2"/><path d="M78,8.5 L82,4.5 L82,7 C86,7 89,8.5 89,13 C87.5,10.8 85,10.2 82,10.2 L82,12.8 Z" fill="#f0f0f0" stroke="#4b5262" stroke-width="1.1" stroke-linejoin="round"/><path d="M96,8 L99.5,8 L97.75,10 Z" fill="#333"/><path d="M116.5,8.5 L112.5,4.5 L112.5,7 C108.5,7 105.5,8.5 105.5,13 C107,10.8 109.5,10.2 112.5,10.2 L112.5,12.8 Z" fill="#f4f4f4" stroke="#b4b8c0" stroke-width="1.1" stroke-linejoin="round"/><path d="M124,8 L127.5,8 L125.75,10 Z" fill="#333"/><path d="M133.5,1 V17 M138.5,1 V17 M144.5,1 V17" stroke="#c4c4c4" stroke-width="1"/><path d="M134.5,1 V17 M139.5,1 V17 M145.5,1 V17" stroke="#fafafa" stroke-width="1"/><path d="M150,6.5 H156 M150,8 L156,8 L153,11 Z" stroke="#111" fill="#111" stroke-width="1"/><path d="M532.5,6 L536,9 L532.5,12 Z" fill="#111"/><g fill="#2e3440"><rect x="685" y="5" width="5" height="9" rx="2"/><rect x="692" y="5" width="5" height="9" rx="2"/><rect x="689" y="7" width="4" height="3"/></g><g fill="#fff"><rect x="686" y="9" width="2.5" height="4"/><rect x="693.5" y="9" width="2.5" height="4"/></g><circle cx="707" cy="7" r="3.2" fill="#f2f2f2" stroke="#30353f" stroke-width="1.2"/><path d="M709,9 L714.5,14.5 M712.5,12.5 L714,11" stroke="#30353f" stroke-width="1.6" fill="none"/><path d="M727,4.5 C726,9.5 730,13 735,12 Z" fill="#f2f2f2" stroke="#30353f" stroke-width="1.1"/><path d="M731,8.5 L735,4.5 M727,15 L737,15 M730,12 L728.5,15 M733,12.5 L734,15" stroke="#30353f" stroke-width="1.1" fill="none"/><path d="M745.5,3.5 L747.3,7.6 L751.5,7.9 L748.3,10.6 L749.3,14.8 L745.5,12.5 L741.7,14.8 L742.7,10.6 L739.5,7.9 L743.7,7.6 Z" fill="#f6f6f6" stroke="#30353f" stroke-width="1"/><circle cx="765" cy="7" r="3.2" fill="#f6f6f6" stroke="#30353f" stroke-width="1.1"/><path d="M759.5,15.5 C759.5,11.5 762,10.5 765,10.5 C768,10.5 770.5,11.5 770.5,15.5 Z" fill="#f6f6f6" stroke="#30353f" stroke-width="1.1"/><path d="M842,9 L846,9 L844,11 Z" fill="#333"/><path d="M853.5,5 L857.5,5 L859.5,8 L861.5,5 L865,5 L861.5,9 L865,13.5 L861,13.5 L859.5,11 L857.5,13.5 L853.5,13.5 L857.5,9 Z" fill="#2a4f9c" stroke="#1c3a7a" stroke-width=".5"/><path d="M855,5.5 L857,5.5 L859.5,9" stroke="#9ab8ea" stroke-width=".7" fill="none"/><path d="M873.5,2 V17" stroke="#c8c8c8"/><path d="M874.5,2 V17" stroke="#fafafa"/><circle cx="886.5" cy="9.5" r="5.6" fill="#fff" stroke="#1d2c4e" stroke-width="1.2"/><text x="883.5" y="13.2" font-family="Liberation Sans" font-weight="bold" font-size="9" fill="#1f4fa3">?</text><path d="M898,9 L902,9 L900,11 Z" fill="#333"/><rect x="925.5" y="6" width="8" height="2.5" fill="#fff" stroke="#2f3a4a" stroke-width=".9"/><rect x="947" y="3" width="6" height="5.5" fill="none" stroke="#2f3a4a" stroke-width="1.6"/><rect x="945.3" y="4.8" width="6" height="5.5" fill="#f4f6fa" stroke="#2f3a4a" stroke-width="1.4"/><rect x="947" y="6.5" width="2.6" height="2.2" fill="#2f3a4a"/><path d="M977.5,3.5 L983.5,9.5 M983.5,3.5 L977.5,9.5" stroke="#4a1a12" stroke-width="3.4"/><path d="M977.5,3.5 L983.5,9.5 M983.5,3.5 L977.5,9.5" stroke="#fff" stroke-width="1.9"/><rect x="646.5" y="24.5" width="11.5" height="5.5" rx="2.5" fill="#f8f8f8" stroke="#3a3a3a" stroke-width="1"/><path d="M650,28.5 L654.5,28.5 L652.25,26 Z" fill="#222"/><path d="M661,27 L665,27 L663,29 Z" fill="#222"/><path d="M26.5,42.5 L26.5,56 L29.5,53 L32,58 L34,57 L31.6,52 L35.8,52 Z" fill="#f4f4f4" stroke="#4a4f59" stroke-width="1" stroke-linejoin="round"/><path d="M49.5,99.3 L55.5,99.3 L52.5,102.5 Z" fill="#222"/><g stroke="#4a4f59" stroke-width="1.1" fill="#e9e9e9"><rect x="71.5" y="40" width="9" height="9" rx="1"/><rect x="81" y="40" width="9" height="9" rx="1"/><rect x="71.5" y="50" width="9" height="9" rx="1"/></g><rect x="84" y="47.5" width="10" height="14" fill="#fff" stroke="#4a4f59" stroke-width="1.2"/><rect x="86" y="49.5" width="5" height="4.5" fill="#2f63a6"/><path d="M86,56.5 H92 M86,59 H92" stroke="#8a8f99" stroke-width="1"/><rect x="73.5" y="67.5" width="16" height="22" fill="#fff" stroke="#3e434d" stroke-width="1.3"/><rect x="76" y="70" width="8.5" height="8" fill="#2d5fa4"/><path d="M87,70 V78" stroke="#9aa" stroke-width="1"/><path d="M76,82 H87 M76,86.5 H87" stroke="#555" stroke-width="1"/><path d="M79,80.5 V83.5 M84,85 V88" stroke="#333" stroke-width="1.4"/><rect x="120.5" y="40.5" width="14" height="18" rx="1.5" fill="#f0f0f0" stroke="#d2d2d2"/><path d="M125.5,61.5 V45.5 H136 L140,49.5 V61.5 Z" fill="#f8f8f8" stroke="#cfcfcf"/><rect x="124" y="39" width="7" height="3" rx="1" fill="#e8e8e8" stroke="#d4d4d4"/><path d="M128,80 L132,80 L130,82.5 Z" fill="#888"/><path d="M157.5,41 L167.5,51 M167.5,41 L157.5,51" stroke="#d0d0d0" stroke-width="1.6"/><circle cx="158.5" cy="50.5" r="1.6" fill="none" stroke="#cfcfcf"/><circle cx="166.5" cy="50.5" r="1.6" fill="none" stroke="#cfcfcf"/><rect x="156.5" y="58.5" width="7" height="9" fill="#f6f6f6" stroke="#d6d6d6"/><rect x="160.5" y="61.5" width="7" height="9" fill="#f6f6f6" stroke="#d6d6d6"/><rect x="156.5" y="77.5" width="8" height="8" fill="#eef" stroke="#4a4f59"/><rect x="158" y="79" width="5" height="3" fill="#3d75c6"/><path d="M158,89.5 L166,81 L169,77.5" stroke="#6b5f4a" stroke-width="2.2" fill="none"/><path d="M156,90 L160,85" stroke="#333" stroke-width="2"/><path d="M180,40.5 H185.5 M180,51.5 H185.5 M182.75,40.5 V51.5" stroke="#5a5f69" stroke-width="2.2"/><path d="M191,45.7 H185" stroke="#111" stroke-width="1.2"/><path d="M184,45.7 L187,43.5 L187,48 Z" fill="#111"/><path d="M192,40.5 C189,41 190,43.5 187.5,44.5 M187.5,47 C190,48 189,50.5 192,51" stroke="#4a4f59" stroke-width="1" fill="none"/><path d="M188,44 L192,42 L192,50 L188,48 Z" fill="#e4e4e4"/><rect x="184.5" y="58.5" width="7.5" height="8" fill="#b7d9f1" stroke="#2d7fd0" stroke-width="1.2"/><circle cx="184.3" cy="67.3" r="4.3" fill="#fff" stroke="#5a5f69" stroke-width="1.1"/><path d="M182,63.3 A4.3,4.3 0 0 1 188.5,66" stroke="#e8505a" stroke-width="1.3" fill="none"/><path d="M184.5,77.5 H192 V86 H187.5 A4.3,4.3 0 1 1 184.5,81.3 Z" fill="#b7d9f1" stroke="#2d7fd0" stroke-width="1.3"/><path d="M233,44.8 L237,44.8 L235,47 Z M227.5,63.8 L231.5,63.8 L229.5,66 Z M227.5,82.8 L231.5,82.8 L229.5,85 Z M281.5,63.8 L285.5,63.8 L283.5,66 Z" fill="#222"/><path d="M244.5,40.5 H250 V43.5 H256 V49 H250 V52 H244.5 Z" fill="#f6f6f6" stroke="#d4d4d4" stroke-width="1"/><path d="M264.5,41 L268,40 L275,43 L275,51.5 L271,52.5 L264.5,49.5 Z" fill="#f4f4f4" stroke="#4a4f59" stroke-width="1.1"/><rect x="266.5" y="43.5" width="5" height="4.5" fill="#2f7fd4"/><rect x="248.5" y="59" width="4" height="3.5" fill="#5a5f69"/><rect x="244" y="59" width="2" height="3.5" fill="#3a8ee6"/><rect x="247" y="64" width="9" height="3.5" fill="#5a5f69"/><rect x="247" y="69.5" width="4" height="2" fill="#3a8ee6"/><circle cx="267" cy="61.5" r="3.2" fill="#f2f2f2" stroke="#4a4f59" stroke-width="1.1"/><rect x="269.5" y="64.5" width="6" height="6" fill="#f4f4f4" stroke="#4a4f59" stroke-width="1.1"/><path d="M264.5,66 V69.5 H267.5" stroke="#111" stroke-width="1" fill="none"/><rect x="244.5" y="77.5" width="3" height="3" fill="#5a5f69"/><rect x="244" y="81" width="7" height="8.5" fill="#3386d9"/><path d="M250,83 L256,77" stroke="#d89000" stroke-width="2.5"/><path d="M251,83 L255.5,78.5" stroke="#ffd640" stroke-width="1.3"/><path d="M252,86.5 H256 M252,89 H256" stroke="#4a4f59" stroke-width="1"/><path d="M264.5,81 L268.5,77 L271.5,80 L267.5,84 Z" fill="#5a5f69"/><path d="M270,82.5 L275.5,89" stroke="#a0705a" stroke-width="2"/><path d="M297.5,38.5 V62.5" stroke="#333" stroke-width="1.2"/><rect x="299.5" y="41" width="8.2" height="7.5" rx="1" fill="#bcdcf2" stroke="#2d7fd0" stroke-width="1.3"/><rect x="299.5" y="51" width="20.7" height="9.5" rx="1" fill="#e9ebee" stroke="#4a4f59" stroke-width="1.2"/><path d="M351,55.5 H331 C329.5,55.5 329.5,50.5 331,50.5 H335.5 C337,50.5 337.5,49.5 337.5,48 V44.5 C337.5,41 345,41 345,44.5 V48 C345,49.5 345.5,50.5 347,50.5 H351" stroke="#3a8ee6" stroke-width="6" fill="none"/><path d="M351,55.5 H331 C329.5,55.5 329.5,50.5 331,50.5 H335.5 C337,50.5 337.5,49.5 337.5,48 V44.5 C337.5,41 345,41 345,44.5 V48 C345,49.5 345.5,50.5 347,50.5 H351" stroke="#fff" stroke-width="4" fill="none"/><path d="M351,55.5 H331 C329.5,55.5 329.5,50.5 331,50.5 H335.5 C337,50.5 337.5,49.5 337.5,48 V44.5 C337.5,41 345,41 345,44.5 V48 C345,49.5 345.5,50.5 347,50.5 H351" stroke="#4a4f59" stroke-width="1.1" fill="none"/><g fill="#333a44"><path d="M308.5,67 L304.5,71 L307,71 L307,74.5 L310,74.5 L310,71 L312.5,71 Z"/><path d="M308.5,90 L304.5,86 L307,86 L307,82.5 L310,82.5 L310,86 L312.5,86 Z"/><path d="M297,78.5 L301,74.5 L301,77 L304.5,77 L304.5,80 L301,80 L301,82.5 Z"/><path d="M320,78.5 L316,74.5 L316,77 L312.5,77 L312.5,80 L316,80 L316,82.5 Z"/></g><rect x="306.5" y="76.5" width="4" height="4" fill="#fff" stroke="#333a44"/><circle cx="333" cy="71.5" r="4.5" fill="#ececf0" stroke="#4a4f59" stroke-width="1.1"/><path d="M339.5,70.3 H345 C346.5,70.3 347,71.5 347,73.5" stroke="#333" stroke-width="1.2" fill="none"/><path d="M345,73 L349,73 L347,75.5 Z" fill="#111"/><circle cx="345" cy="85.5" r="4" fill="#cfe6f5" stroke="#3a8ee6" stroke-width="1"/><circle cx="341.5" cy="82" r="4.5" fill="#bcdcf2" stroke="#2d7fd0" stroke-width="1.2"/><path d="M359,41 H362 L366.5,47 V53 H363 V60.5 H359 Z" fill="#e8e8ea" stroke="#4a4f59" stroke-width="1.2" stroke-linejoin="round"/><path d="M369.3,38 V62" stroke="#2aa02a" stroke-width="1.2" stroke-dasharray="4,4"/><path d="M372,44 L376,40.5 H379.5 V60.5 H372 Z" fill="#d6eaf8" stroke="#8ec0ea" stroke-width="1"/><path d="M369.5,49 V59 L372,57 L374,61 L375.5,60.3 L373.8,56.3 L377,56.3 Z" fill="#f2f2f2" stroke="#4a4f59" stroke-width=".9"/><path d="M389.5,41 H392.5 L397,47 V53 H393.5 V60.5 H389.5 Z" fill="#e8e8ea" stroke="#4a4f59" stroke-width="1.2" stroke-linejoin="round"/><path d="M400,38 V58" stroke="#3a8ee6" stroke-width="1.6"/><path d="M403,44 L407,40.5 H410.5 V60.5 H403 Z" fill="#d6eaf8" stroke="#8ec0ea" stroke-width="1"/><path d="M400.5,61 L409.5,51.5 L411.5,53.5 L402.5,62.5 Z" fill="#f6c436" stroke="#8a5a10" stroke-width=".9"/><path d="M400,62.5 L401,60" stroke="#333" stroke-width="1.2"/><path d="M376,72 A9.2,9.2 0 1 1 366.5,71" stroke="#353c46" stroke-width="2" fill="none"/><path d="M366,67.5 L372.5,70.5 L366.5,74 Z" fill="#353c46"/><path d="M394,69.5 H403 M394,74.5 H403.5" stroke="#353c46" stroke-width="1.2"/><path d="M401,68 L404,69.5 L401,71 Z" fill="#111"/><path d="M389,72.5 H406 V80" stroke="#3a8ee6" stroke-width="3" fill="none"/><path d="M389,71.5 H405.5 M389,73.5 H405.5" stroke="#5a5f69" stroke-width=".8"/><path d="M404.5,80 V90 M407.5,80 V90" stroke="#5a5f69" stroke-width="1"/><path d="M410,87 V78" stroke="#353c46" stroke-width="1.2"/><path d="M408.5,78.5 L410,76 L411.5,78.5 Z" fill="#111"/><rect x="420.5" y="44.5" width="12" height="4" rx="2" fill="#3a8ee6" stroke="#2d6fc0" stroke-width=".8"/><path d="M426.5,42 V51" stroke="#f06060" stroke-width="1" stroke-dasharray="1,1"/><rect x="440" y="44.5" width="4" height="4" rx="1" fill="#3a8ee6"/><rect x="448" y="44.5" width="4" height="4" rx="1" fill="#3a8ee6"/><path d="M446,42 V51" stroke="#f06060" stroke-width="1" stroke-dasharray="1,1"/><path d="M460,44.5 H463 M463,41 V48 L470,47 V41 Z" stroke="#4a4f59" stroke-width="1" fill="#f4f4f4"/><path d="M466.5,47 L471.5,51.5 M471.5,47 L466.5,51.5" stroke="#e02828" stroke-width="1.8"/><g stroke-width="1.1"><rect x="420.5" y="58.5" width="5" height="5" fill="#fff" stroke="#4a4f59"/><rect x="427.5" y="58.5" width="5" height="5" fill="#bcdcf2" stroke="#2d7fd0"/><rect x="420.5" y="65.5" width="5" height="5" fill="#bcdcf2" stroke="#2d7fd0"/><rect x="427.5" y="65.5" width="5" height="5" fill="#bcdcf2" stroke="#2d7fd0"/></g><rect x="440.5" y="58.5" width="12" height="12" rx="1" fill="#bcdcf2" stroke="#2d7fd0" stroke-width="1.2"/><rect x="440.5" y="64.5" width="6" height="6" fill="#e6e6e8" stroke="#4a4f59" stroke-width="1.2"/><path d="M460,64.5 H463 M463,61 V68 L470,67 V61 Z" stroke="#4a4f59" stroke-width="1" fill="#f4f4f4"/><path d="M423,78.5 H428" stroke="#222" stroke-width="1.2"/><path d="M427.5,76.5 L430,78.5 L427.5,80.5 Z" fill="#222"/><rect x="421" y="83" width="4" height="3" fill="#5a5f69"/><rect x="425" y="83" width="6" height="3" fill="#3a8ee6"/><path d="M432.5,77 V89.5" stroke="#5a5f69" stroke-width="1.6"/><path d="M443,78.5 H448" stroke="#222" stroke-width="1.2"/><path d="M447.5,76.5 L450,78.5 L447.5,80.5 Z" fill="#222"/><rect x="440" y="82" width="4" height="2.5" fill="#5a5f69"/><rect x="444" y="82" width="7" height="2.5" fill="#3a8ee6"/><rect x="440" y="86" width="4" height="2.5" fill="#5a5f69"/><rect x="444" y="86" width="7" height="2.5" fill="#3a8ee6"/><path d="M452.5,77 V89.5" stroke="#5a5f69" stroke-width="1.6"/><path d="M462,80 L470.5,88.5 M470.5,80 L462,88.5" stroke="#e02828" stroke-width="2.4"/><circle cx="488.8" cy="53" r="4.3" fill="#f8f8f8" stroke="#d4d4d4"/><rect x="487" y="57" width="3.6" height="4" fill="#f0f0f0" stroke="#d4d4d4" stroke-width=".8"/><path d="M501,55 L504,55 L502.5,57 Z M501,73.5 L504,73.5 L502.5,75.5 Z" fill="#333"/><path d="M510.5,55 L515,52 L518.5,53 L519,50 L522.5,50 L523,57 L517,60 L510.5,58 Z" fill="#f4f4f4" stroke="#d0d0d0"/><path d="M484,80 C487,78 489,76 495.5,69" stroke="#cfcfcf" stroke-width="2.2" fill="none"/><path d="M510.5,70 H523" stroke="#8a8f99" stroke-width="1.2"/><path d="M510.5,72.5 H523" stroke="#222" stroke-width="1.3"/><path d="M510.5,75.5 H523" stroke="#333" stroke-width="1" stroke-dasharray="1.5,1.5"/><path d="M518.5,76.5 L522.5,76.5 L520.5,79.5 Z" fill="#1a6ed8"/><rect x="519.5" y="75" width="2" height="2" fill="#1a6ed8"/><path d="M535,46.5 H556" stroke="#333a44" stroke-width="1.2"/><path d="M534,46.5 L538,43.5 L538,49.5 Z M557,46.5 L553,43.5 L553,49.5 Z" fill="#333a44"/><rect x="534.5" y="52" width="22.5" height="5" rx="1.2" fill="#f0b820" stroke="#a06a10" stroke-width=".9"/><path d="M536,53.5 H556" stroke="#8a5a10" stroke-width=".8" stroke-dasharray="1,1"/><path d="M563,50.5 L567,50.5 L565,52.5 Z M563,78.5 L567,78.5 L565,80.5 Z" fill="#222"/><path d="M538.5,86.5 L552.5,71.5" stroke="#222" stroke-width="1.2"/><path d="M534,83 L541,90 M549.5,66 L557,73" stroke="#222" stroke-width="1"/><path d="M537.5,87.5 L538.5,82.5 L542,86 Z M553.5,70.5 L552.5,75.5 L549,72 Z" fill="#222"/><g stroke="#cfcfcf" stroke-width="1" fill="#f4f4f4"><path d="M580,39.5 H578 V62 H580 M599,39.5 H601 V62 H599" fill="none"/><rect x="581.5" y="42" width="7" height="8" /><rect x="581.5" y="51" width="7" height="8"/><rect x="589.5" y="49" width="8" height="9"/></g><g stroke="#cfcfcf" stroke-width="1" fill="#f4f4f4"><path d="M610,39.5 H608 V62 H610 M629,39.5 H631 V62 H629" fill="none"/><circle cx="615.5" cy="48" r="5"/><rect x="616.5" y="48" width="10" height="10"/><circle cx="627" cy="42.5" r="2.5"/></g><g stroke="#cfcfcf" stroke-width="1" fill="#f6f6f6"><path d="M583,66.5 L601,72 V85 L594,81 Z"/><path d="M579,70 L597,76 V89.5 L578.5,84 Z"/></g><g stroke="#cdcdcd" stroke-width="1" fill="#f6f6f6"><rect x="607.5" y="66.5" width="4" height="5"/><rect x="624.5" y="66.5" width="4" height="5"/><rect x="607.5" y="84" width="7" height="5"/><path d="M625,82 L628,85 L625,88 L622,85 Z"/><path d="M613,69 H622 M609.5,73 V81 M614,73 L620,79" fill="none"/></g><rect x="657" y="40.5" width="20.5" height="17.5" fill="#a9d3ee"/><path d="M657.5,40.5 H677.5 V58 H668" stroke="#2a78d0" stroke-width="1" stroke-dasharray="1,1" fill="none"/><rect x="657" y="48" width="11.5" height="10" fill="#ececec"/><path d="M657,48.5 H668.5 V58" stroke="#444" stroke-width=".8" stroke-dasharray="1,1" fill="none"/><path d="M656.3,38.5 V62" stroke="#222" stroke-width="1.3"/><rect x="656" y="60" width="5" height="2.5" fill="#222"/><path d="M662.5,48 V43.5" stroke="#111" stroke-width="1"/><path d="M660.5,44.5 L662.5,41.5 L664.5,44.5 Z" fill="#111"/><path d="M669,53.5 H674" stroke="#111" stroke-width="1"/><path d="M673.5,51.5 L676.5,53.5 L673.5,55.5 Z" fill="#111"/><rect x="709" y="40.5" width="20" height="18" fill="#f0f0f0" stroke="#d8d8d8" stroke-dasharray="1,1"/><rect x="709" y="40.5" width="11" height="9" fill="#f8f8f8" stroke="#cfcfcf"/><path d="M708.5,39 V62" stroke="#d0d0d0" stroke-width="1.2"/><rect x="708.5" y="60" width="4" height="2.5" fill="#d0d0d0"/></svg>
</body></html>
